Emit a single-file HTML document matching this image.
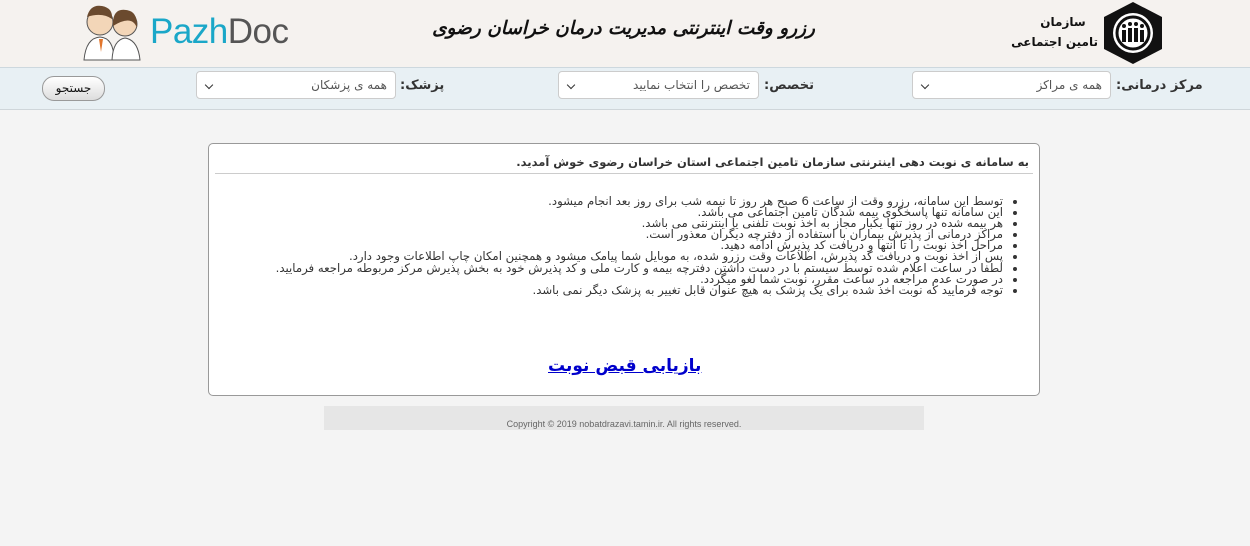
<!DOCTYPE html>
<html><head><meta charset="utf-8"><style>
*{margin:0;padding:0;box-sizing:border-box}
body{width:1250px;height:546px;background:#f4f4f4;position:relative;overflow:hidden;font-family:"DejaVu Sans","Liberation Sans",sans-serif}
.hdr{position:absolute;left:0;top:0;width:1250px;height:67px;background:#f5f2ef}
.bar{position:absolute;left:0;top:67px;width:1250px;height:43px;background:#e8f0f4;border-top:1px solid #cdd8de;border-bottom:1px solid #cfd6da}
.lbl{position:absolute;top:78px;font-size:13px;font-weight:bold;color:#333;direction:rtl}
.sel{position:absolute;top:71px;height:28px;background:#fff;border:1px solid #ccc;border-radius:4px;font-size:12px;color:#555;direction:rtl;padding:6px 8px 0 0}
.sel:after{content:"";position:absolute;left:9px;top:10px;width:5px;height:5px;border-right:1.5px solid #333;border-bottom:1.5px solid #333;transform:rotate(45deg)}
.btn{position:absolute;left:42px;top:76px;width:63px;height:25px;border:1px solid #999;border-radius:12px;background:linear-gradient(#fff,#ddd);font-size:12px;text-align:center;line-height:22px;color:#111}
.box{position:absolute;left:208px;top:143px;width:832px;height:253px;background:#fff;border:1px solid #999;border-radius:5px}
.ttl{position:absolute;left:6px;right:6px;top:8px;height:22px;border-bottom:1px solid #ccc;font-size:11.5px;font-weight:bold;color:#333;direction:rtl;padding-right:4px;line-height:20px}
ul{position:absolute;right:20px;top:52px;direction:rtl;font-size:11.7px;line-height:11.1px;color:#333;list-style:disc;padding-right:16px;white-space:nowrap}
.lnk{position:absolute;left:339px;top:212px;font-size:17px;font-weight:bold;color:#00c;text-decoration:underline;direction:rtl}
.ft{position:absolute;left:324px;top:406px;width:600px;height:24px;background:#e6e6e6;font-size:9px;color:#666;text-align:center;padding-top:13px;font-family:"Liberation Sans",sans-serif}
</style></head><body>
<div class="hdr">
 <svg style="position:absolute;left:80px;top:2px" width="65" height="60" viewBox="0 0 65 60"><circle cx="20" cy="20" r="13" fill="#f3d6b8" stroke="#555"/><path d="M7 15 Q10 2 22 4 Q33 6 32 17 Q22 10 7 15Z" fill="#6b4a2e"/><circle cx="45" cy="22" r="12" fill="#f3d6b8" stroke="#555"/><path d="M33 24 Q32 6 46 8 Q58 9 57 26 Q52 12 33 24Z" fill="#6b4a2e"/><path d="M4 58 Q6 36 20 35 Q34 36 34 58Z" fill="#fff" stroke="#555"/><path d="M32 58 Q33 38 45 36 Q58 38 60 58Z" fill="#fff" stroke="#555"/><path d="M19 37 L21 50 L23 37Z" fill="#e2762c"/></svg>
 <div style="position:absolute;left:150px;top:12px;font-family:'Liberation Sans',sans-serif;font-size:35px;letter-spacing:-0.5px"><span style="color:#1aa7c8">Pazh</span><span style="color:#555">Doc</span></div>
 <div style="position:absolute;left:440px;top:18px;width:375px;font-family:'DejaVu Serif',serif;font-style:italic;font-weight:bold;font-size:18.5px;color:#111;direction:rtl;white-space:nowrap;text-align:center">رزرو وقت اینترنتی مدیریت درمان خراسان رضوی</div>
 <div style="position:absolute;left:1028px;top:12px;font-size:12px;font-weight:bold;color:#111;direction:rtl;text-align:center;line-height:20px;width:70px;white-space:nowrap">سازمان<br>تامین اجتماعی</div>
 <svg style="position:absolute;left:1100px;top:0px" width="66" height="66" viewBox="0 0 66 66"><polygon points="33,2 62,17 62,49 33,64 4,49 4,17" fill="#111"/><circle cx="33" cy="33" r="20" fill="#fff"/><circle cx="33" cy="33" r="16" fill="none" stroke="#111" stroke-width="3"/><g fill="#111"><rect x="22" y="30" width="4" height="12"/><rect x="28" y="28" width="4" height="14"/><rect x="34" y="28" width="4" height="14"/><rect x="40" y="30" width="4" height="12"/><circle cx="24" cy="26" r="2"/><circle cx="30" cy="24" r="2"/><circle cx="36" cy="24" r="2"/><circle cx="42" cy="26" r="2"/></g></svg>
</div>
<div class="bar"></div>
<div class="lbl" style="left:1116px">مرکز درمانی:</div>
<div class="sel" style="left:912px;width:199px">همه ی مراکز</div>
<div class="lbl" style="left:764px">تخصص:</div>
<div class="sel" style="left:558px;width:201px">تخصص را انتخاب نمایید</div>
<div class="lbl" style="left:400px">پزشک:</div>
<div class="sel" style="left:196px;width:200px">همه ی پزشکان</div>
<div class="btn">جستجو</div>
<div class="box">
 <div class="ttl">به سامانه ی نوبت دهی اینترنتی سازمان تامین اجتماعی استان خراسان رضوی خوش آمدید.</div>
 <ul>
 <li>توسط این سامانه، رزرو وقت از ساعت 6 صبح هر روز تا نیمه شب برای روز بعد انجام میشود.</li>
 <li>این سامانه تنها پاسخگوی بیمه شدگان تامین اجتماعی می باشد.</li>
 <li>هر بیمه شده در روز تنها یکبار مجاز به اخذ نوبت تلفنی یا اینترنتی می باشد.</li>
 <li>مراکز درمانی از پذیرش بیماران با استفاده از دفترچه دیگران معذور است.</li>
 <li>مراحل اخذ نوبت را تا انتها و دریافت کد پذیرش ادامه دهید.</li>
 <li>پس از اخذ نوبت و دریافت کد پذیرش، اطلاعات وقت رزرو شده، به موبایل شما پیامک میشود و همچنین امکان چاپ اطلاعات وجود دارد.</li>
 <li>لطفا در ساعت اعلام شده توسط سیستم با در دست داشتن دفترچه بیمه و کارت ملی و کد پذیرش خود به بخش پذیرش مرکز مربوطه مراجعه فرمایید.</li>
 <li>در صورت عدم مراجعه در ساعت مقرر، نوبت شما لغو میگردد.</li>
 <li>توجه فرمایید که نوبت اخذ شده برای یک پزشک به هیچ عنوان قابل تغییر به پزشک دیگر نمی باشد.</li>
 </ul>
 <div class="lnk">بازیابی قبض نوبت</div>
</div>
<div class="ft">Copyright © 2019 nobatdrazavi.tamin.ir. All rights reserved.</div>
</body></html>
